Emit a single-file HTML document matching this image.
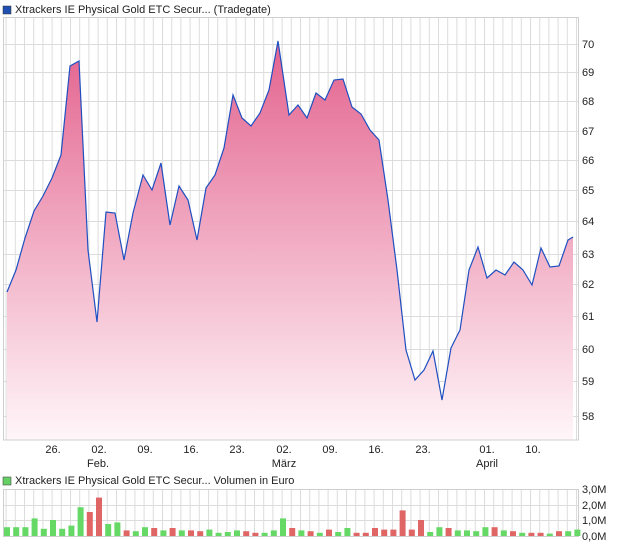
<!DOCTYPE html>
<html><head><meta charset="utf-8"><style>
body{margin:0;background:#fff;width:620px;height:546px;overflow:hidden;font-family:"Liberation Sans",sans-serif}
svg{position:absolute;left:0;top:0}
text{font-family:"Liberation Sans",sans-serif;font-size:11px;fill:#222}
</style></head><body>
<svg width="620" height="546" viewBox="0 0 620 546">
<defs>
<linearGradient id="g" x1="0" y1="40" x2="0" y2="440" gradientUnits="userSpaceOnUse">
<stop offset="0" stop-color="#e3628e"/><stop offset="1" stop-color="#fff6f9"/>
</linearGradient>
<pattern id="vg" x="5.6" y="0" width="9.2" height="10" patternUnits="userSpaceOnUse">
<rect x="0" y="0" width="1" height="10" fill="#dcdcdc"/></pattern>
</defs>
<rect x="3" y="6" width="8" height="8" fill="#1f4fb0" stroke="#333" stroke-width="0.5"/>
<text x="15" y="13">Xtrackers IE Physical Gold ETC Secur... (Tradegate)</text>
<rect x="3" y="17" width="576" height="423" fill="url(#vg)"/>
<g stroke="#dcdcdc" stroke-width="1">
<line x1="3" x2="579" y1="44.5" y2="44.5"/><line x1="3" x2="579" y1="72.5" y2="72.5"/>
<line x1="3" x2="579" y1="101.5" y2="101.5"/><line x1="3" x2="579" y1="131.5" y2="131.5"/>
<line x1="3" x2="579" y1="160.5" y2="160.5"/><line x1="3" x2="579" y1="190.5" y2="190.5"/>
<line x1="3" x2="579" y1="221.5" y2="221.5"/><line x1="3" x2="579" y1="254.5" y2="254.5"/>
<line x1="3" x2="579" y1="284.5" y2="284.5"/><line x1="3" x2="579" y1="316.5" y2="316.5"/>
<line x1="3" x2="579" y1="349.5" y2="349.5"/><line x1="3" x2="579" y1="381.5" y2="381.5"/>
<line x1="3" x2="579" y1="416.5" y2="416.5"/>
</g>
<path fill="url(#g)" stroke="none" d="M7,440 L7,292 L16,270 L25,238 L34,211 L43,196 L52,178 L61,155 L70,66 L79,61 L88,250 L97,322 L106,212 L115,213 L124,260 L133,213 L143,175 L152,190 L161,163 L170,225 L179,186 L188,200 L197,240 L206,188 L215,175 L224,148 L233,95 L242,118 L251,126 L260,113 L269,90 L278,41 L289,115 L298,105 L307,118 L316,93 L325,100 L334,80 L343,79 L352,107 L361,114 L370,130 L379,140 L388,200 L397,270 L406,350 L415,380 L424,370 L433,351 L442,400 L451,348 L460,330 L469,270 L478,247 L487,278 L496,270 L505,275 L514,262 L523,270 L532,285 L541,248 L550,267 L559,266 L568,240 L573,237 L573,440 Z"/>
<polyline fill="none" stroke="#1f4fc0" stroke-width="1.2" points="7,292 16,270 25,238 34,211 43,196 52,178 61,155 70,66 79,61 88,250 97,322 106,212 115,213 124,260 133,213 143,175 152,190 161,163 170,225 179,186 188,200 197,240 206,188 215,175 224,148 233,95 242,118 251,126 260,113 269,90 278,41 289,115 298,105 307,118 316,93 325,100 334,80 343,79 352,107 361,114 370,130 379,140 388,200 397,270 406,350 415,380 424,370 433,351 442,400 451,348 460,330 469,270 478,247 487,278 496,270 505,275 514,262 523,270 532,285 541,248 550,267 559,266 568,240 573,237"/>
<rect x="3.5" y="17.5" width="575" height="422.5" fill="none" stroke="#cfcfcf"/>
<g>
<text x="582" y="48">70</text><text x="582" y="76">69</text><text x="582" y="105">68</text>
<text x="582" y="135">67</text><text x="582" y="164">66</text><text x="582" y="194">65</text>
<text x="582" y="225">64</text><text x="582" y="258">63</text><text x="582" y="288">62</text>
<text x="582" y="320">61</text><text x="582" y="353">60</text><text x="582" y="385">59</text>
<text x="582" y="420">58</text>
</g>
<g text-anchor="middle">
<text x="53" y="453">26.</text><text x="99" y="453">02.</text><text x="145" y="453">09.</text>
<text x="191" y="453">16.</text><text x="237" y="453">23.</text><text x="284" y="453">02.</text>
<text x="330" y="453">09.</text><text x="376" y="453">16.</text><text x="423" y="453">23.</text>
<text x="487" y="453">01.</text><text x="533" y="453">10.</text>
<text x="98" y="467">Feb.</text><text x="284" y="467">März</text><text x="487" y="467">April</text>
</g>
<rect x="3" y="477" width="8" height="8" fill="#66d066" stroke="#333" stroke-width="0.5"/>
<text x="15" y="484">Xtrackers IE Physical Gold ETC Secur... Volumen in Euro</text>
<rect x="3" y="489" width="576" height="48" fill="url(#vg)"/>
<g stroke="#dcdcdc"><line x1="3" x2="579" y1="505.5" y2="505.5"/><line x1="3" x2="579" y1="520.5" y2="520.5"/></g>
<rect x="3.5" y="489.5" width="575" height="47" fill="none" stroke="#cfcfcf"/>
<g id="bars"></g>
<g><text x="582" y="493">3,0M</text><text x="582" y="509">2,0M</text><text x="582" y="524">1,0M</text><text x="582" y="540">0,0M</text></g>
</svg>
<script>
var d="g.55 g.55 g.55 g1.1 g.45 g1 g.45 g.65 g1.8 r1.5 r2.4 g.75 g.85 r.35 g.3 g.55 r.5 g.35 r.5 g.35 r.35 r.3 g.4 g.2 g.25 g.35 r.3 r.2 g.2 g.35 g1.1 r.5 g.35 r.3 g.2 r.4 g.25 g.5 r.2 r.2 r.5 r.4 r.4 r1.6 r.4 r1 g.25 g.55 r.5 g.35 g.35 g.3 g.55 r.55 g.35 r.3 g.2 r.2 r.2 g.15 r.3 g.3 g.4".split(" ");
var s="";d.forEach(function(v,i){var h=parseFloat(v.slice(1))*16;var c=v[0]=="g"?"#66d866":"#e06666";s+='<rect x="'+(4+i*9.2).toFixed(1)+'" y="'+(536-h).toFixed(1)+'" width="6" height="'+h.toFixed(1)+'" fill="'+c+'"/>';});
document.getElementById("bars").innerHTML=s;
</script>
</body></html>
